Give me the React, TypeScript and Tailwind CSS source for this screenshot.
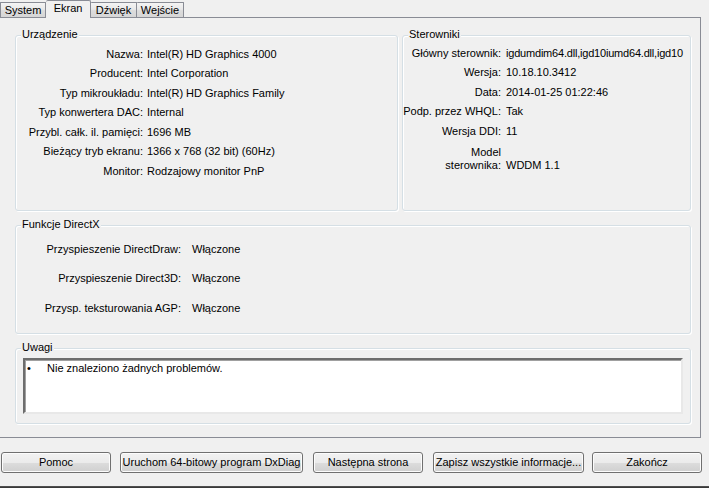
import clsx from "clsx"

const device = [
  ["Nazwa:", "Intel(R) HD Graphics 4000"],
  ["Producent:", "Intel Corporation"],
  ["Typ mikroukładu:", "Intel(R) HD Graphics Family"],
  ["Typ konwertera DAC:", "Internal"],
  ["Przybl. całk. il. pamięci:", "1696 MB"],
  ["Bieżący tryb ekranu:", "1366 x 768 (32 bit) (60Hz)"],
  ["Monitor:", "Rodzajowy monitor PnP"],
]

const drivers = [
  ["Główny sterownik:", "igdumdim64.dll,igd10iumd64.dll,igd10"],
  ["Wersja:", "10.18.10.3412"],
  ["Data:", "2014-01-25 01:22:46"],
  ["Podp. przez WHQL:", "Tak"],
  ["Wersja DDI:", "11"],
]

const directx = [
  ["Przyspieszenie DirectDraw:", "Włączone"],
  ["Przyspieszenie Direct3D:", "Włączone"],
  ["Przysp. teksturowania AGP:", "Włączone"],
]

const tabs = [
  { name: "System", w: "w-[46px]" },
  { name: "Ekran", w: "w-[45px]", active: true },
  { name: "Dźwięk", w: "w-[46px]" },
  { name: "Wejście", w: "w-[47px]" },
]

const buttons = [
  { label: "Pomoc", cls: "ml-[1px] w-[110px]" },
  { label: "Uruchom 64-bitowy program DxDiag", cls: "ml-[9px] w-[183px]" },
  { label: "Następna strona", cls: "ml-[10px] w-[110px]" },
  { label: "Zapisz wszystkie informacje...", cls: "ml-[10px] w-[151px]" },
  { label: "Zakończ", cls: "ml-[8px] w-[110px]" },
]

function Group({
  title,
  className,
  children,
}: {
  title: string
  className?: string
  children?: React.ReactNode
}) {
  return (
    <div
      className={clsx(
        "relative rounded-[3px] border border-[#d5dfe5] shadow-[inset_1px_1px_0_#ffffff,1px_1px_0_#ffffff]",
        className
      )}
    >
      <span className="absolute -top-[8px] left-[5px] bg-[#f0f0f0] px-px leading-[13px]">
        {title}
      </span>
      {children}
    </div>
  )
}

export default function App() {
  return (
    <div className="flex h-[488px] w-[709px] flex-col overflow-hidden bg-[#f0f0f0] font-['Liberation_Sans',Arial,sans-serif] text-[11px] text-black">
      {/* tab strip */}
      <div className="flex h-[17px] items-end">
        {tabs.map((t, i) => (
          <div
            key={t.name}
            className={clsx(
              "flex items-center justify-center border-t border-r border-[#898c95] leading-[13px]",
              t.w,
              i === 0 && "border-l",
              t.active
                ? "relative z-10 -mb-px h-[18px] rounded-t-[2px] bg-[#f0f0f0] pb-[3px]"
                : "h-[15px] rounded-t-[1px] bg-[linear-gradient(#f4f4f4,#e8e8e8_45%,#dcdcdc_55%,#d6d6d6)] pt-px"
            )}
          >
            {t.name}
          </div>
        ))}
      </div>

      {/* tab page */}
      <div className="flex h-[421px] w-[701px] flex-col border-t border-r border-b border-[#898c95] pt-[17px] pl-[15px]">
        <div className="flex h-[176px] w-[676px] gap-[4px]">
          <Group title="Urządzenie" className="w-[383px] pt-[8px]">
            {device.map(([k, v]) => (
              <div key={k} className="flex h-[19.5px] items-center whitespace-nowrap">
                <div className="w-[127px] text-right">{k}</div>
                <div className="ml-[4px]">{v}</div>
              </div>
            ))}
          </Group>
          <Group title="Sterowniki" className="w-[289px] pt-[7px]">
            {drivers.map(([k, v], i) => (
              <div key={k} className="flex h-[19.5px] items-center whitespace-nowrap">
                <div className="w-[98px] text-right">{k}</div>
                <div className={clsx("ml-[5px]", i === 0 && "tracking-[-0.2px]")}>{v}</div>
              </div>
            ))}
            <div className="mt-[5px] flex items-end leading-[13px]">
              <div className="w-[98px] text-right">
                Model
                <br />
                sterownika:
              </div>
              <div className="ml-[5px]">WDDM 1.1</div>
            </div>
          </Group>
        </div>

        <Group title="Funkcje DirectX" className="mt-[14px] h-[109px] w-[676px] pt-[8px]">
          {directx.map(([k, v]) => (
            <div key={k} className="flex h-[29.5px] items-center whitespace-nowrap">
              <div className="w-[165px] text-right">{k}</div>
              <div className="ml-[11px]">{v}</div>
            </div>
          ))}
        </Group>

        <Group title="Uwagi" className="mt-[14px] h-[76px] w-[676px] px-[7px] pt-[9px]">
          <div className="h-[56px] border-2 border-t-[#6d6d6d] border-r-[#e8e8e8] border-b-[#e8e8e8] border-l-[#6d6d6d] bg-white pt-px pl-[2px] leading-[14px] shadow-[inset_1px_1px_0_#a0a0a0]">
            <div className="flex">
              <span className="w-[20px]">•</span>
              <span>Nie znaleziono żadnych problemów.</span>
            </div>
          </div>
        </Group>
      </div>

      {/* buttons */}
      <div className="mt-[14px] flex">
        {buttons.map((b) => (
          <button
            key={b.label}
            className={clsx(
              "h-[21px] rounded-[3px] border border-[#707070] bg-[linear-gradient(#f2f2f2_0%,#ebebeb_50%,#dddddd_50%,#cfcfcf_100%)] text-center leading-[19px] whitespace-nowrap shadow-[inset_0_0_0_1px_#fcfcfc]",
              b.cls
            )}
          >
            {b.label}
          </button>
        ))}
      </div>

      <div className="mt-auto h-[2px] bg-[linear-gradient(#5a5a5a,#2e2e2e)]" />
    </div>
  )
}
